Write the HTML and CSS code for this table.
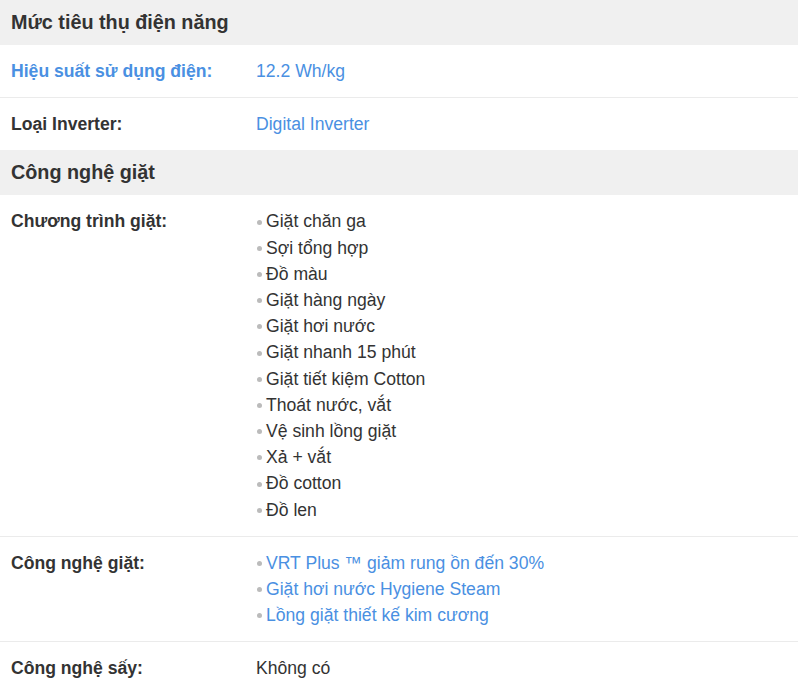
FILE: index.html
```html
<!DOCTYPE html>
<html lang="vi">
<head>
<meta charset="utf-8">
<link rel="stylesheet" href="styles.css">
</head>
<body>
<div class="specs">
  <div class="group-title">Mức tiêu thụ điện năng</div>
  <div class="row">
    <div class="label link">Hiệu suất sử dụng điện:</div>
    <div class="value link">12.2 Wh/kg</div>
  </div>
  <div class="row last">
    <div class="label">Loại Inverter:</div>
    <div class="value link">Digital Inverter</div>
  </div>
  <div class="group-title">Công nghệ giặt</div>
  <div class="row">
    <div class="label">Chương trình giặt:</div>
    <ul class="value list">
      <li>Giặt chăn ga</li>
      <li>Sợi tổng hợp</li>
      <li>Đồ màu</li>
      <li>Giặt hàng ngày</li>
      <li>Giặt hơi nước</li>
      <li>Giặt nhanh 15 phút</li>
      <li>Giặt tiết kiệm Cotton</li>
      <li>Thoát nước, vắt</li>
      <li>Vệ sinh lồng giặt</li>
      <li>Xả + vắt</li>
      <li>Đồ cotton</li>
      <li>Đồ len</li>
    </ul>
  </div>
  <div class="row">
    <div class="label">Công nghệ giặt:</div>
    <ul class="value list link">
      <li>VRT Plus ™ giảm rung ồn đến 30%</li>
      <li>Giặt hơi nước Hygiene Steam</li>
      <li>Lồng giặt thiết kế kim cương</li>
    </ul>
  </div>
  <div class="row">
    <div class="label">Công nghệ sấy:</div>
    <div class="value">Không có</div>
  </div>
</div>
</body>
</html>
```
FILE: styles.css
```css
html, body {
  margin: 0;
  padding: 0;
  background: #fff;
}
body {
  font-family: "Liberation Sans", Arial, sans-serif;
  color: #333;
  font-size: 17.6px;
}
.specs {
  width: 798px;
}
.group-title {
  background: #f0f0f0;
  font-size: 19.8px;
  font-weight: bold;
  line-height: 25px;
  padding: 10px 11px;
  color: #333;
}
.row {
  display: grid;
  grid-template-columns: 245px 1fr;
  padding: 13px 0 13px 11px;
  border-bottom: 1px solid #ebebeb;
  line-height: 26.2px;
}
.row.last {
  border-bottom: none;
}
.label {
  font-weight: bold;
  color: #333;
}
.value {
  color: #333;
}
.link {
  color: #4a90e2;
}
.list {
  list-style: none;
  margin: 0;
  padding: 0;
}
.list li {
  display: flex;
  align-items: center;
  gap: 4px;
}
.list li::before {
  content: "";
  flex: none;
  width: 5px;
  height: 5px;
  border-radius: 50%;
  background: #bbb;
  margin-left: 1px;
  margin-top: 1px;
}
```
